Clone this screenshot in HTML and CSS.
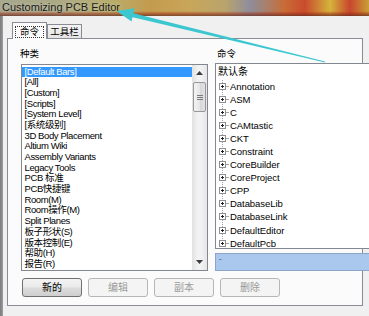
FILE: index.html
```html
<!DOCTYPE html>
<html lang="zh-CN">
<head>
<meta charset="utf-8">
<title>Customizing PCB Editor</title>
<link rel="stylesheet" href="styles.css">
</head>
<body>
<div class="titlebar"><span class="title">Customizing PCB Editor</span></div>
<div class="window">
  <div class="frame"></div>
  <div class="client">
    <div class="tabs">
      <div class="tab active"><span class="focus">命令</span></div>
      <div class="tab">工具栏</div>
    </div>
    <div class="page">
      <div class="label">种类</div>
      <div class="label right">命令</div>
      <div class="listbox">
        <div class="items">
          <div class="item sel">[Default Bars]</div>
          <div class="item">[All]</div>
          <div class="item">[Custom]</div>
          <div class="item">[Scripts]</div>
          <div class="item">[System Level]</div>
          <div class="item">[系统级别]</div>
          <div class="item">3D Body Placement</div>
          <div class="item">Altium Wiki</div>
          <div class="item">Assembly Variants</div>
          <div class="item">Legacy Tools</div>
          <div class="item">PCB 标准</div>
          <div class="item">PCB快捷键</div>
          <div class="item">Room(M)</div>
          <div class="item">Room操作(M)</div>
          <div class="item">Split Planes</div>
          <div class="item">板子形状(S)</div>
          <div class="item">版本控制(E)</div>
          <div class="item">帮助(H)</div>
          <div class="item">报告(R)</div>
        </div>
        <div class="vscroll">
          <div class="sbtn"><svg width="7" height="4" viewBox="0 0 7 4"><polygon points="0,4 3.5,0 7,4" fill="#3d3d3d"/></svg></div>
          <div class="thumb"><span class="grip"></span></div>
          <div class="track"></div>
          <div class="sbtn"><svg width="7" height="4" viewBox="0 0 7 4"><polygon points="0,0 7,0 3.5,4" fill="#3d3d3d"/></svg></div>
        </div>
      </div>
      <div class="rightcol">
        <div class="tree">
          <div class="tree-head">默认条</div>
          <div class="tree-body">
            <div class="node"><span class="pm"></span><span class="dash"></span>Annotation</div>
            <div class="node"><span class="pm"></span><span class="dash"></span>ASM</div>
            <div class="node"><span class="pm"></span><span class="dash"></span>C</div>
            <div class="node"><span class="pm"></span><span class="dash"></span>CAMtastic</div>
            <div class="node"><span class="pm"></span><span class="dash"></span>CKT</div>
            <div class="node"><span class="pm"></span><span class="dash"></span>Constraint</div>
            <div class="node"><span class="pm"></span><span class="dash"></span>CoreBuilder</div>
            <div class="node"><span class="pm"></span><span class="dash"></span>CoreProject</div>
            <div class="node"><span class="pm"></span><span class="dash"></span>CPP</div>
            <div class="node"><span class="pm"></span><span class="dash"></span>DatabaseLib</div>
            <div class="node"><span class="pm"></span><span class="dash"></span>DatabaseLink</div>
            <div class="node"><span class="pm"></span><span class="dash"></span>DefaultEditor</div>
            <div class="node"><span class="pm"></span><span class="dash"></span>DefaultPcb</div>
          </div>
        </div>
        <div class="desc">-</div>
      </div>
      <div class="buttons">
        <button class="btn default">新的</button>
        <button class="btn" disabled>编辑</button>
        <button class="btn" disabled>副本</button>
        <button class="btn" disabled>删除</button>
      </div>
    </div>
  </div>
</div>
<svg class="pointer" width="369" height="316" viewBox="0 0 369 316">
  <polygon points="130.4,12.6 325.1,61.5 324.9,62.5 129.6,16.4" fill="#3cc7d0"/>
  <polygon points="116.5,11 134.5,8.2 131.5,21.4" fill="#3cc7d0"/>
</svg>
</body>
</html>
```
FILE: styles.css
```css
* {
  box-sizing: border-box;
  margin: 0;
  padding: 0;
}

html, body {
  width: 369px;
  height: 316px;
  overflow: hidden;
}

body {
  position: relative;
  font-family: "Liberation Sans", "Noto Sans CJK SC", sans-serif;
  color: #000;
  background: #f0f0f0;
}

.titlebar {
  height: 16px;
  padding-left: 2px;
  background:
    linear-gradient(to bottom, rgba(0,0,0,0) 0, rgba(0,0,0,0) 70%, rgba(160,45,25,0.5) 84%, rgba(95,45,35,0.75) 100%),
    linear-gradient(to right, #a7a78e 0, #aba983 60px, #b7ad6b 110px, #c49b4e 150px, #c8a65a 190px, #b9a46c 225px, #8e8d9b 250px, #a6816f 265px, #c96b35 285px, #c94b2d 305px, #d4b43b 330px, #c9462d 350px, #c8a036 369px);
}

.title {
  display: block;
  font-size: 11px;
  line-height: 14px;
  color: #1c1c1c;
  text-shadow: 0 0 4px rgba(255, 255, 255, 0.45);
}

.window {
  display: flex;
  height: 300px;
}

.frame {
  width: 3px;
  background: linear-gradient(to right, #7b7b7b, #9c9c9c);
}

.client {
  flex: 1;
  display: flex;
  flex-direction: column;
  padding: 6px 0 0 4px;
  background: #f0f0f0;
}

.tabs {
  position: relative;
  z-index: 1;
  display: flex;
  align-items: flex-end;
  height: 16px;
  padding-left: 5px;
}

.tab {
  width: 35px;
  height: 14px;
  border: 1px solid #898c95;
  border-bottom: none;
  background: linear-gradient(#f4f4f4, #e4e4e4);
  font-size: 9.5px;
  line-height: 13px;
  text-align: center;
}

.tab.active {
  height: 17px;
  margin-bottom: -1px;
  padding: 3px 2px 0;
  background: #fbfbfb;
}

.focus {
  display: block;
  height: 12px;
  border: 1px dotted #333;
  line-height: 10px;
}

.page {
  width: 356px;
  height: 268px;
  border: 1px solid #898c95;
  background: #fbfbfb;
  padding: 8px 0 8px 13px;
  display: grid;
  grid-template-columns: 187px 160px;
  grid-template-rows: 16px 208px 26px;
  column-gap: 7px;
  align-content: start;
}

.label {
  font-size: 9.5px;
  line-height: 14px;
  margin-left: -1px;
}

.label.right {
  margin-left: 2px;
}

.listbox {
  margin-top: 1px;
  height: 207px;
  border: 1px solid #828790;
  background: #fff;
  display: flex;
}

.items {
  flex: 1;
  padding-top: 1.5px;
  font-size: 9.5px;
  letter-spacing: -0.4px;
  overflow: hidden;
}

.item {
  height: 10.7px;
  line-height: 10.7px;
  padding-left: 2.5px;
  white-space: nowrap;
}

.item.sel {
  background: #3399ff;
  color: #fff;
}

.vscroll {
  width: 15px;
  display: flex;
  flex-direction: column;
  background: linear-gradient(to right, #e2e2e2, #f2f2f2 40%, #f2f2f2 60%, #e6e6e6);
}

.sbtn {
  height: 16px;
  display: flex;
  align-items: center;
  justify-content: center;
}

.thumb {
  height: 30px;
  margin: 1px 1px 0;
  border: 1px solid #979797;
  border-radius: 2px;
  background: linear-gradient(to right, #f4f4f4, #e6e6e6 50%, #d6d6d6 51%, #e2e2e2);
  display: flex;
  align-items: center;
  justify-content: center;
}

.grip {
  width: 6px;
  height: 5px;
  background: repeating-linear-gradient(to bottom, #7a7a7a 0 1px, transparent 1px 2px);
}

.track {
  flex: 1;
}

.rightcol {
  display: flex;
  flex-direction: column;
}

.tree {
  height: 186px;
  border: 1px solid #828790;
  border-right: none;
  background: #fff;
  overflow: hidden;
  font-size: 9.5px;
  letter-spacing: -0.05px;
}

.tree-head {
  height: 15.5px;
  line-height: 15px;
  padding-left: 2px;
  font-size: 10px;
}

.tree-body {
  background: repeating-linear-gradient(to bottom, #a3a3a3 0 1px, transparent 1px 2px) 6px 0 / 1px 100% no-repeat;
}

.node {
  height: 13.1px;
  display: flex;
  align-items: center;
  padding-left: 3px;
  white-space: nowrap;
}

.pm {
  flex: none;
  width: 7px;
  height: 7px;
  border: 1px solid #8e8f8f;
  background:
    linear-gradient(#222, #222) center / 3px 1px no-repeat,
    linear-gradient(#222, #222) center / 1px 3px no-repeat,
    #fff;
}

.dash {
  flex: none;
  width: 3px;
  height: 1px;
  margin-right: 1px;
  background: #a3a3a3;
}

.desc {
  margin-top: 4px;
  height: 18px;
  border: 1px solid #8ba4c9;
  border-right: none;
  background: #aac7ed;
  padding: 1px 0 0 3px;
  font-size: 8px;
  line-height: 8px;
  color: #333;
}

.buttons {
  grid-column: 1 / -1;
  margin-top: 7px;
  padding-left: 1px;
  display: flex;
  gap: 6px;
}

.btn {
  width: 60px;
  height: 19px;
  border: 1px solid #b3b7ba;
  border-radius: 3px;
  background: #f4f4f4;
  color: #9a9a9a;
  font-family: "Liberation Sans", "Noto Sans CJK SC", sans-serif;
  font-size: 10px;
  line-height: 17px;
  text-align: center;
}

.btn.default {
  border-color: #707070;
  background: linear-gradient(#f3f3f3, #ebebeb 45%, #dcdcdc 55%, #cfcfcf);
  color: #000;
}

.pointer {
  position: absolute;
  left: 0;
  top: 0;
  pointer-events: none;
}
```
